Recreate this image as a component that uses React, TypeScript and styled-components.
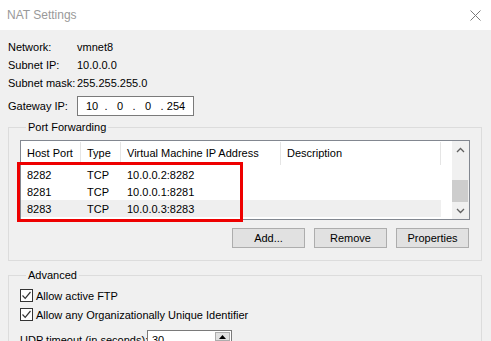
import { createGlobalStyle } from 'styled-components'
import styled from 'styled-components'

type Rule = {
  hostPort: string
  type: string
  address: string
  description: string
}

const rules: Rule[] = [
  { hostPort: '8282', type: 'TCP', address: '10.0.0.2:8282', description: '' },
  { hostPort: '8281', type: 'TCP', address: '10.0.0.1:8281', description: '' },
  { hostPort: '8283', type: 'TCP', address: '10.0.0.3:8283', description: '' },
]

const info = [
  { label: 'Network:', value: 'vmnet8' },
  { label: 'Subnet IP:', value: '10.0.0.0' },
  { label: 'Subnet mask:', value: '255.255.255.0' },
]

const columns = ['Host Port', 'Type', 'Virtual Machine IP Address', 'Description']

function CloseIcon() {
  return (
    <svg width="11" height="11" viewBox="0 0 11 11">
      <path d="M0.5 0.5 L10.5 10.5 M10.5 0.5 L0.5 10.5" stroke="#7a7a7a" strokeWidth="1" fill="none" />
    </svg>
  )
}

function Chevron({ down }: { down?: boolean }) {
  return (
    <svg width="9" height="6" viewBox="0 0 9 6">
      <path
        d={down ? 'M1 1 L4.5 4.5 L8 1' : 'M1 5 L4.5 1.5 L8 5'}
        stroke="#606060"
        strokeWidth="1.3"
        fill="none"
      />
    </svg>
  )
}

function CheckMark() {
  return (
    <svg width="11" height="11" viewBox="0 0 11 11">
      <path d="M1.5 5.5 L4.2 8.3 L9.5 2" stroke="#333" strokeWidth="1.2" fill="none" />
    </svg>
  )
}

export default function App() {
  return (
    <Window>
      <GlobalStyle />
      <TitleBar>
        <Title>NAT Settings</Title>
        <CloseIcon />
      </TitleBar>

      <Body>
        <InfoGrid>
          {info.map((row) => (
            <InfoRow key={row.label}>
              <Label>{row.label}</Label>
              <span>{row.value}</span>
            </InfoRow>
          ))}
        </InfoGrid>

        <GatewayRow>
          <Label>Gateway IP:</Label>
          <IpField>
            <Octet>10</Octet>
            <Dot>.</Dot>
            <Octet>0</Octet>
            <Dot>.</Dot>
            <Octet>0</Octet>
            <Dot>.</Dot>
            <Octet>254</Octet>
          </IpField>
        </GatewayRow>

        <GroupBox $top={11}>
          <Legend>Port Forwarding</Legend>
          <ListBox>
            <ListContent>
              <HeaderRow>
                {columns.map((c) => (
                  <HeaderCell key={c}>{c}</HeaderCell>
                ))}
              </HeaderRow>
              {rules.map((r, i) => (
                <DataRow key={r.hostPort} $hover={i === 2}>
                  <Cell>{r.hostPort}</Cell>
                  <Cell>{r.type}</Cell>
                  <Cell>{r.address}</Cell>
                  <Cell>{r.description}</Cell>
                </DataRow>
              ))}
            </ListContent>
            <ScrollBar>
              <ScrollArrow>
                <Chevron />
              </ScrollArrow>
              <Track>
                <Thumb />
              </Track>
              <ScrollArrow>
                <Chevron down />
              </ScrollArrow>
            </ScrollBar>
          </ListBox>
          <ButtonRow>
            <Button>Add...</Button>
            <Button>Remove</Button>
            <Button>Properties</Button>
          </ButtonRow>
        </GroupBox>

        <GroupBox $top={14}>
          <Legend>Advanced</Legend>
          <CheckRow $first>
            <CheckBox>
              <CheckMark />
            </CheckBox>
            Allow active FTP
          </CheckRow>
          <CheckRow>
            <CheckBox>
              <CheckMark />
            </CheckBox>
            Allow any Organizationally Unique Identifier
          </CheckRow>
          <UdpRow>
            <UdpLabel>UDP timeout (in seconds):</UdpLabel>
            <SpinField>
              <SpinValue>30</SpinValue>
              <SpinButton>
                <svg width="7" height="4" viewBox="0 0 7 4">
                  <path d="M0 4 L3.5 0 L7 4 Z" fill="#000" />
                </svg>
              </SpinButton>
            </SpinField>
          </UdpRow>
        </GroupBox>
      </Body>

      <Highlight />
    </Window>
  )
}

const GlobalStyle = createGlobalStyle`
  html, body {
    margin: 0;
    padding: 0;
    background: #f0f0f0;
    overflow: hidden;
  }
  body {
    font-family: "Liberation Sans", Arial, sans-serif;
    font-size: 11px;
    color: #000;
  }
`

const Window = styled.div`
  position: relative;
  width: 491px;
  height: 341px;
  overflow: hidden;
  background: #f0f0f0;
`

const TitleBar = styled.div`
  height: 30px;
  background: #fff;
  display: flex;
  align-items: center;
  justify-content: space-between;
  padding: 0 10px 0 7px;
  box-sizing: border-box;
`

const Title = styled.span`
  font-size: 12px;
  color: #999;
`

const Body = styled.div`
  padding: 8px 9px 0 8px;
`

const InfoGrid = styled.div`
  display: flex;
  flex-direction: column;
`

const InfoRow = styled.div`
  display: grid;
  grid-template-columns: 69px auto;
  align-items: center;
  height: 18px;
`

const Label = styled.span`
  white-space: nowrap;
`

const GatewayRow = styled.div`
  display: grid;
  grid-template-columns: 69px auto;
  align-items: center;
  height: 20px;
  margin-top: 4px;
`

const IpField = styled.div`
  display: flex;
  align-items: center;
  width: 117px;
  height: 20px;
  box-sizing: border-box;
  padding-left: 4px;
  background: #fff;
  border: 1px solid #7a7a7a;
`

const Octet = styled.span`
  width: 20px;
  text-align: center;
`

const Dot = styled.span`
  width: 8px;
  text-align: center;
`

const GroupBox = styled.div<{ $top: number }>`
  margin-top: ${(p) => p.$top}px;
  border: 1px solid #dcdcdc;
  padding: 0 11px 12px 11px;
`

const Legend = styled.div`
  width: fit-content;
  margin: -8px 0 0 6px;
  padding: 0 2px;
  line-height: 14px;
  background: #f0f0f0;
`

const ListBox = styled.div`
  margin-top: 6px;
  height: 80px;
  box-sizing: border-box;
  border: 1px solid #828790;
  background: #fff;
  display: flex;
`

const ListContent = styled.div`
  flex: 1;
`

const HeaderRow = styled.div`
  display: grid;
  grid-template-columns: 60px 40px 160px 160px;
  height: 25px;
  align-items: center;
`

const HeaderCell = styled.div`
  height: 23px;
  line-height: 23px;
  padding-left: 6px;
  border-right: 1px solid #e5e5e5;
  white-space: nowrap;
  overflow: hidden;
`

const DataRow = styled.div<{ $hover?: boolean }>`
  display: grid;
  grid-template-columns: 60px 40px 160px 160px;
  height: 17px;
  align-items: center;
  width: 420px;
  background: ${(p) => (p.$hover ? '#efefef' : 'transparent')};
`

const Cell = styled.div`
  padding-left: 6px;
  white-space: nowrap;
`

const ScrollBar = styled.div`
  width: 17px;
  background: #f0f0f0;
  display: flex;
  flex-direction: column;
`

const ScrollArrow = styled.div`
  height: 17px;
  display: flex;
  align-items: center;
  justify-content: center;
`

const Track = styled.div`
  flex: 1;
  display: flex;
  flex-direction: column;
  justify-content: flex-end;
`

const Thumb = styled.div`
  height: 22px;
  margin: 0 1px 0 0;
  background: #cdcdcd;
`

const ButtonRow = styled.div`
  display: flex;
  justify-content: flex-end;
  gap: 9px;
  margin-top: 8px;
  padding-right: 1px;
`

const Button = styled.button`
  width: 73px;
  height: 20px;
  padding: 0;
  background: #e1e1e1;
  border: 1px solid #adadad;
  font-family: inherit;
  font-size: 11px;
  color: #000;
`

const CheckRow = styled.div<{ $first?: boolean }>`
  display: flex;
  align-items: center;
  gap: 3px;
  height: 19px;
  margin-top: ${(p) => (p.$first ? 4 : 0)}px;
  white-space: nowrap;
`

const CheckBox = styled.span`
  width: 13px;
  height: 13px;
  box-sizing: border-box;
  border: 1px solid #333;
  background: #fff;
  display: flex;
  align-items: center;
  justify-content: center;
`

const UdpRow = styled.div`
  display: flex;
  align-items: center;
  height: 20px;
  margin-top: 6px;
`

const UdpLabel = styled.span`
  width: 127px;
  white-space: nowrap;
`

const SpinField = styled.div`
  width: 85px;
  height: 20px;
  box-sizing: border-box;
  border: 1px solid #7a7a7a;
  background: #fff;
  display: flex;
  padding: 1px;
`

const SpinValue = styled.span`
  flex: 1;
  padding-left: 3px;
  line-height: 16px;
`

const SpinButton = styled.span`
  width: 15px;
  height: 9px;
  box-sizing: border-box;
  background: #e1e1e1;
  border: 1px solid #adadad;
  display: flex;
  align-items: center;
  justify-content: center;
`

/* red annotation drawn over the first rows of the list */
const Highlight = styled.div`
  position: absolute;
  left: 17px;
  top: 162px;
  width: 226px;
  height: 60px;
  box-sizing: border-box;
  border: 3px solid #ee0000;
  pointer-events: none;
`
